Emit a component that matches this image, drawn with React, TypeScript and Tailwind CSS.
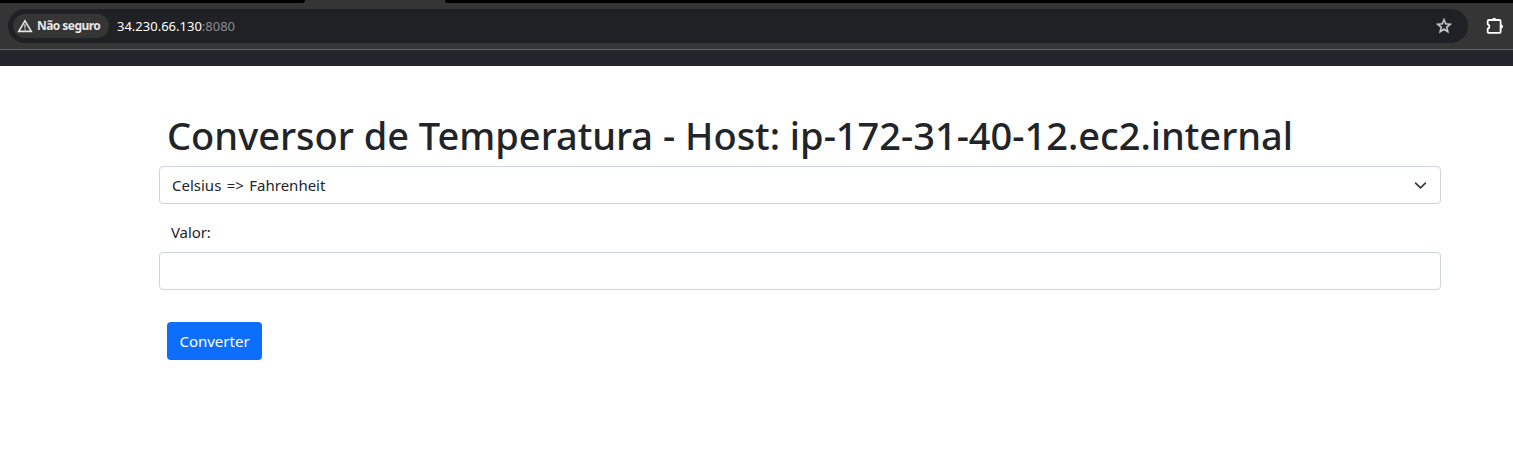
function WarningIcon() {
  return (
    <svg width="16" height="14" viewBox="0 0 16 14" fill="none" className="-ml-px shrink-0">
      <path d="M8 1.8 14.3 12.4H1.7Z" stroke="#e6e6e6" strokeWidth="1.6" />
      <path d="M8 5.2v3.6M8 9.4v1.4" stroke="#cfcfcf" strokeWidth="1.4" />
    </svg>
  );
}

function StarIcon() {
  return (
    <svg width="20" height="20" viewBox="0 0 24 24" fill="#c7c7c7" stroke="#c7c7c7" strokeWidth="0.3" className="shrink-0">
      <path d="m21.5 9.4-6.8-.7L12 2.5 9.3 8.7l-6.8.7 5.2 4.5L6.1 20.6 12 17l5.9 3.6-1.6-6.7zM12 14.7l-3.3 2 .9-3.8-2.9-2.5 3.8-.3L12 6.6l1.5 3.5 3.8.3-2.9 2.5.9 3.8z" />
    </svg>
  );
}

function ExtensionIcon() {
  return (
    <svg width="18" height="18" viewBox="0 0 18 18" className="shrink-0">
      <path
        d="M2.9 3h10.5a1.2 1.2 0 0 1 1.2 1.2v10.5a1.2 1.2 0 0 1-1.2 1.2H2.9a1.2 1.2 0 0 1-1.2-1.2v-3.1a2.2 2.2 0 0 0 0-4.3V4.2A1.2 1.2 0 0 1 2.9 3Z"
        fill="none"
        stroke="#fff"
        strokeWidth="1.8"
        strokeLinejoin="round"
      />
      <path d="M6.2 2.8a2 2 0 0 1 4 0ZM15 7.4a2 2 0 0 1 0 4Z" fill="#fff" />
    </svg>
  );
}

function BrowserBar() {
  return (
    <header>
      <div className="flex h-[3px] bg-[#353535]">
        <div className="w-[305px] rounded-br-[3px] bg-black" />
        <div className="w-[140px]" />
        <div className="flex-1 rounded-bl-[3px] bg-black" />
      </div>
      <div className="flex h-[47px] items-center border-b border-[#636466] bg-[#353535] pl-2">
        <div className="flex h-[34px] w-[1460px] items-center rounded-full bg-[#202124] pr-[14px] pl-[5px]">
          <div className="flex h-6 w-24 items-center rounded-full bg-[#353535] pl-[5px]">
            <WarningIcon />
            <span className="ml-1 text-[12px] font-bold tracking-[-0.55px] whitespace-nowrap text-[#e8e8e8]">Não seguro</span>
          </div>
          <span className="ml-2 flex-1 pt-px text-[13px] text-white">
            34.230.66.130<span className="text-[#8b8c8e]">:8080</span>
          </span>
          <StarIcon />
        </div>
        <div className="ml-[18px]">
          <ExtensionIcon />
        </div>
      </div>
      <div className="h-4 bg-[#212529]" />
    </header>
  );
}

export default function App() {
  return (
    <div className="h-[467px] overflow-hidden bg-white font-['Noto_Sans','Open_Sans',sans-serif] text-[#212529]">
      <BrowserBar />
      <main className="ml-[159px] w-[1282px] pt-[45px]">
        <h1 className="ml-2 h-[55px] text-[38px] leading-[48px] font-medium tracking-[-0.01px] whitespace-nowrap">
          Conversor de Temperatura - Host: ip-172-31-40-12.ec2.internal
        </h1>
        <div className="flex h-[38px] items-center justify-between rounded-[4px] border border-[#ced4da] pr-[13px] pl-3 text-[15px]">
          <span className="[word-spacing:1.5px]">Celsius =&gt; Fahrenheit</span>
          <svg width="13" height="13" viewBox="0 0 16 16" fill="none" stroke="#343a40" strokeWidth="2" strokeLinecap="round" strokeLinejoin="round">
            <path d="m2 5 6 6 6-6" />
          </svg>
        </div>
        <label htmlFor="valor" className="mt-4 ml-3 block h-8 text-[15px] leading-6 tracking-[-0.1px]">
          Valor:
        </label>
        <input id="valor" className="block h-[38px] w-full rounded-[4px] border border-[#ced4da] px-3 outline-none" />
        <button className="mt-8 ml-2 h-[38px] w-[95px] rounded-[4px] bg-[#0d6efd] text-[15px] text-white">Converter</button>
      </main>
    </div>
  );
}
